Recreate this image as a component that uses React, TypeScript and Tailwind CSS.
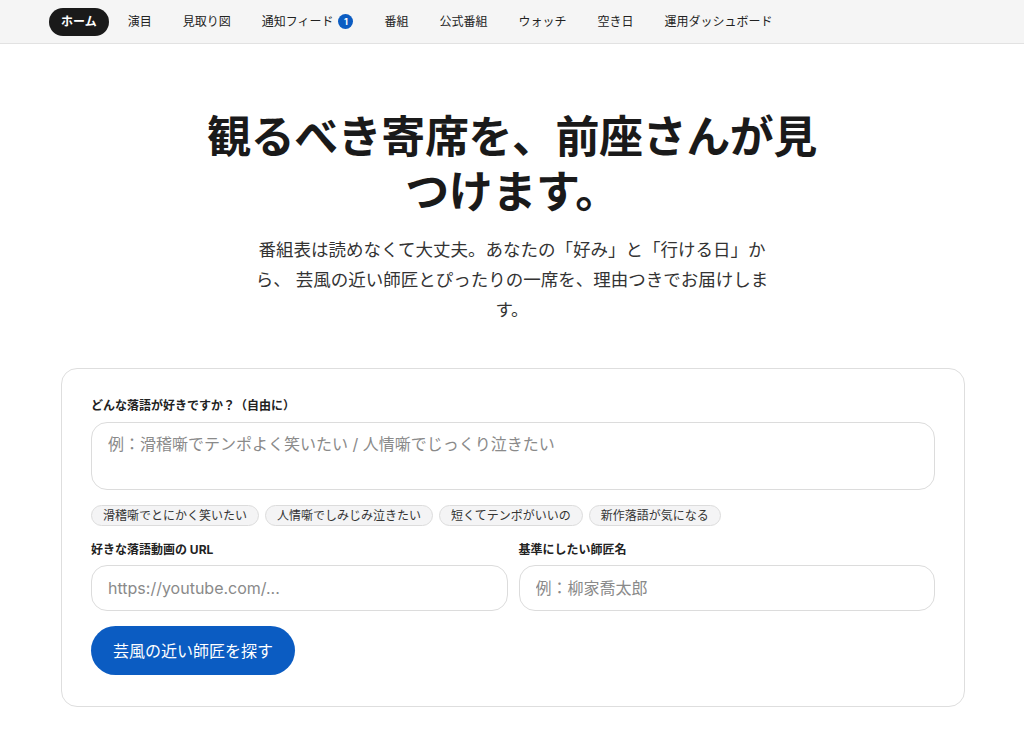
import { useState } from "react";

const navItems = ["ホーム", "演目", "見取り図", "通知フィード", "番組", "公式番組", "ウォッチ", "空き日", "運用ダッシュボード"];

const chips = ["滑稽噺でとにかく笑いたい", "人情噺でしみじみ泣きたい", "短くてテンポがいいの", "新作落語が気になる"];

export default function App() {
    const [active] = useState(0);

    return (
        <div className="min-h-screen bg-white text-[#1a1a1a] [font-family:Inter,'Noto_Sans_CJK_JP',sans-serif]">
            <nav className="h-[44px] bg-[#f5f5f5] border-b border-[#e2e2e2] pl-[49px] flex items-center gap-[7px]">
                {navItems.map((item, i) => (
                    <a
                    key={item}
                    className={`flex items-center gap-[5px] h-[28px] px-3 rounded-full text-[12px] leading-none ${
                        active === i ? "bg-[#1a1a1a] text-white font-bold" : "text-[#222]"
                    }`}
                    >
                        {item}
                        {item === "通知フィード" && (
                            <span className="w-[15px] h-[15px] rounded-full bg-[#0b5cc2] text-white text-[9px] font-bold flex items-center justify-center">
                                1
                            </span>
                        )}
                    </a>
                ))}
            </nav>

            <main className="flex flex-col items-center pt-[66px]">
                <h1 className="max-w-[640px] text-center text-[44px] leading-[55px] font-bold tracking-[-0.01em]">
                    観るべき寄席を、前座さんが見つけます。
                </h1>
                <p className="mt-[15px] max-w-[520px] text-center text-[17.5px] leading-[30px] text-[#333]">
                    番組表は読めなくて大丈夫。あなたの「好み」と「行ける日」から、 芸風の近い師匠とぴったりの一席を、理由つきでお届けします。
                </p>

                <section className="mt-[43px] ml-[2px] w-[904px] border border-[#dedede] rounded-2xl px-[29px] pt-[29px] pb-[31px] bg-white">
                    <label className="block text-[12px] font-bold leading-[16px] text-[#222]">どんな落語が好きですか？（自由に）</label>
                    <textarea
                    rows={2}
                    placeholder="例：滑稽噺でテンポよく笑いたい / 人情噺でじっくり泣きたい"
                    className="mt-2 block w-full h-[68px] resize-none border border-[#dcdcdc] rounded-2xl px-4 py-[10px] text-[16px] leading-[22px] placeholder:text-[#8a8a8a] outline-none"
                    />

                    <div className="mt-[15px] flex gap-[6px]">
                        {chips.map((c) => (
                            <button
                            key={c}
                            className="h-[21px] px-[11px] rounded-full border border-[#dcdcdc] bg-[#f4f4f5] text-[12px] leading-none text-[#333]"
                            >
                                {c}
                            </button>
                        ))}
                    </div>

                    <div className="mt-[16px] grid grid-cols-2 gap-[11px]">
                        <div className="flex flex-col">
                            <label className="text-[12px] font-bold leading-[16px] text-[#222]">好きな落語動画の URL</label>
                            <input
                            placeholder="https://youtube.com/..."
                            className="mt-[7px] h-[46px] border border-[#dcdcdc] rounded-2xl px-4 text-[16px] placeholder:text-[#8a8a8a] outline-none"
                            />
                        </div>
                        <div className="flex flex-col">
                            <label className="text-[12px] font-bold leading-[16px] text-[#222]">基準にしたい師匠名</label>
                            <input
                            placeholder="例：柳家喬太郎"
                            className="mt-[7px] h-[46px] border border-[#dcdcdc] rounded-2xl px-4 text-[16px] placeholder:text-[#8a8a8a] outline-none"
                            />
                        </div>
                    </div>

                    <button className="mt-[15px] h-[49px] px-[22px] rounded-full bg-[#0b5cc2] text-white text-[16px]">
                        芸風の近い師匠を探す
                    </button>
                </section>
            </main>
        </div>
    );
}
